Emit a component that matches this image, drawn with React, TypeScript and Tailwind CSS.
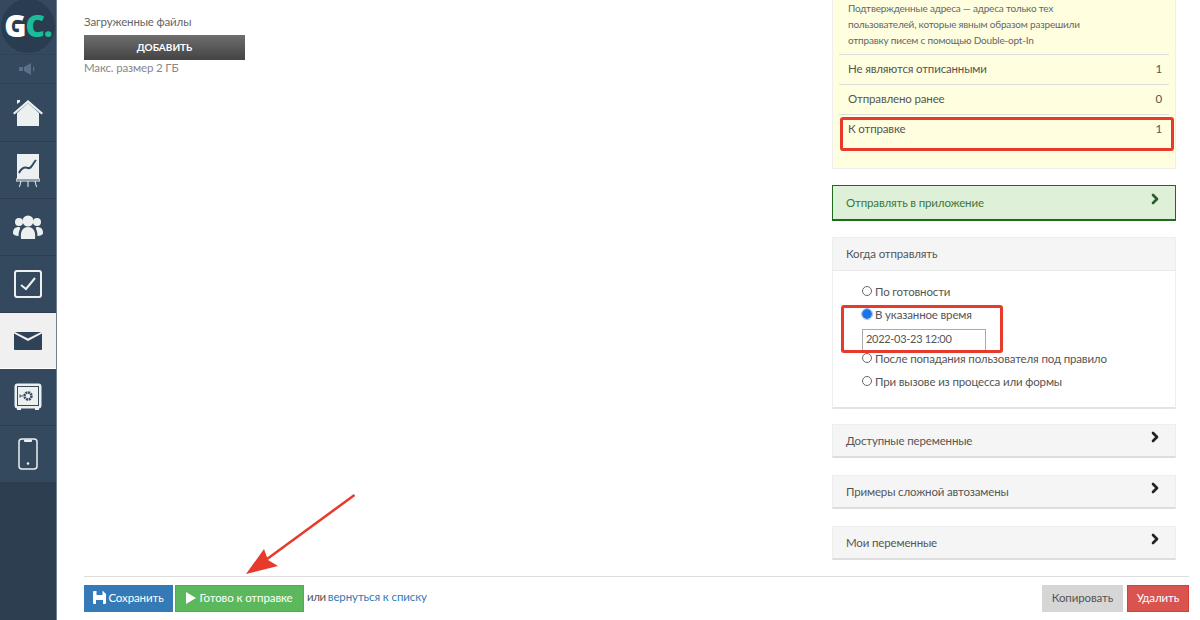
import { ChevronRight } from "lucide-react";

const font = { fontFamily: 'Lato, "Liberation Sans", sans-serif' };

function NavItem({ h, active, children }: { h: string; active?: boolean; children: React.ReactNode }) {
  return (
    <div className={`${h} flex items-center justify-center border-b ${active ? "bg-[#f0f0f0] border-white" : "border-[#2c3e50]"}`}>
      {children}
    </div>
  );
}

function Collapsed({ title, className }: { title: string; className?: string }) {
  return (
    <div className={`flex h-[34px] items-start justify-between border border-[#eee] border-b-2 border-b-[#ddd] bg-[#f5f5f5] pl-[13px] pr-[12px] ${className ?? ""}`}>
      <span className="mt-[7px] text-[11.5px] tracking-[-0.15px] text-[#555]">{title}</span>
      <ChevronRight size={16} strokeWidth={4} className="mt-[4px] text-[#222]" />
    </div>
  );
}

function Radio({ label, checked, className }: { label: string; checked?: boolean; className?: string }) {
  return (
    <div className={`flex h-[16px] items-center text-[11.5px] tracking-[-0.15px] text-[#555] ${className ?? ""}`}>
      <span className={`mr-[3px] mt-[-4px] h-[10px] w-[10px] shrink-0 rounded-full ${checked ? "bg-[#1a73e8] outline outline-1 outline-[#9cc0f2]" : "border border-[#666] bg-white"}`} />
      <span className="pb-[2px]">{label}</span>
    </div>
  );
}

function StatRow({ label, value, last }: { label: string; value: string; last?: boolean }) {
  return (
    <div className={`flex h-[30px] items-center justify-between pb-[2px] pl-[9px] pr-[7px] text-[11.5px] tracking-[-0.15px] text-[#555] ${last ? "" : "border-b border-[#ddd]"}`}>
      <span>{label}</span>
      <span>{value}</span>
    </div>
  );
}

export default function App() {
  return (
    <div className="relative flex h-[620px] w-[1200px] overflow-hidden bg-white" style={font}>
      <aside className="flex h-full w-[57px] shrink-0 flex-col border-r border-[#6d8094] bg-[#2c3e50]">
        <div className="flex h-[55px] items-start justify-center border-b border-[#2f4358] bg-[#34495e]">
          <div className="mt-[-1px] flex h-[54px] w-[54px] items-center justify-center rounded-full bg-[#2a3d50] text-[30px] leading-none font-black tracking-[-1px]" style={{ fontFamily: '"Open Sans", sans-serif' }}>
            <span className="text-white">G</span>
            <span className="text-[#1abc9c]">C.</span>
          </div>
        </div>
        <div className="flex h-[29px] items-center justify-center border-b border-[#2f4358] bg-[#34495e]">
          <svg width="18" height="12" viewBox="0 0 18 12" fill="#5a7086">
            <path d="M0 4h4v4H0zM5 4l7-4v12L5 8zM14 3c2 2 2 4 0 6z" />
          </svg>
        </div>
        <div className="bg-[#34495e]">
          <NavItem h="h-[58px]">
            <svg width="30" height="28" viewBox="0 0 30 28" fill="#ecf0f1">
              <path d="M4 14 15 4l11 10v13H4z" />
              <path d="M0 14 15 1l15 13-1.500 1.500L15 4 1.500 15.500zM4 5V1h3v2z" />
            </svg>
          </NavItem>
          <NavItem h="h-[57px]">
            <svg width="24" height="34" viewBox="0 0 24 34" fill="none">
              <rect x="1" y="1" width="22" height="25" fill="#ecf0f1" />
              <path d="M3 20c3-6 6-6 9-5s4-3 8-8" stroke="#34495e" strokeWidth="2" />
              <path d="M0 26h24v2H0zM5 28 3.500 34M19 28l1.500 6M12 28v6" stroke="#ecf0f1" strokeWidth="1" />
            </svg>
          </NavItem>
          <NavItem h="h-[57px]">
            <svg width="30" height="24" viewBox="0 0 30 24" fill="#ecf0f1">
              <circle cx="15" cy="6" r="5.500" />
              <circle cx="6" cy="7" r="4" />
              <circle cx="24" cy="7" r="4" />
              <path d="M8 24c-1-8 2-12 7-12s8 4 7 12z" />
              <path d="M0 18c0-4 2-6 6-6 1 0 1.500 1 1 2-1 2-1.500 4-1.500 7C3 21 0 20 0 18zM30 18c0-4-2-6-6-6-1 0-1.500 1-1 2 1 2 1.500 4 1.500 7 2.500 0 5.500-1 5.500-3z" />
            </svg>
          </NavItem>
          <NavItem h="h-[57px]">
            <svg width="28" height="28" viewBox="0 0 28 28" fill="none">
              <rect x="1" y="1" width="26" height="26" rx="2" stroke="#ecf0f1" strokeWidth="2" />
              <path d="M7 15l5 4 9-11" stroke="#ecf0f1" strokeWidth="2" />
            </svg>
          </NavItem>
          <NavItem h="h-[56px]" active>
            <svg width="28" height="18" viewBox="0 0 28 18" fill="#2f4358">
              <path d="M0 1.500 14 9l14-7.500V17a1 1 0 0 1-1 1H1a1 1 0 0 1-1-1z" />
              <path d="M1 0h26L14 6.500z" />
            </svg>
          </NavItem>
          <NavItem h="h-[57px]">
            <svg width="28" height="28" viewBox="0 0 28 28" fill="none">
              <rect x="1" y="1" width="26" height="24" rx="2" fill="#ecf0f1" stroke="#ecf0f1" />
              <rect x="3.500" y="3.500" width="21" height="19" fill="#ecf0f1" stroke="#34495e" strokeWidth="1" />
              <circle cx="14" cy="13" r="3.500" stroke="#34495e" strokeWidth="2.500" strokeDasharray="2 0.700" />
              <path d="M6 13h3M6 11.500v3" stroke="#34495e" strokeWidth="1" />
              <path d="M3 25h4v2H3zM21 25h4v2h-4z" fill="#ecf0f1" />
            </svg>
          </NavItem>
          <NavItem h="h-[57px]">
            <svg width="20" height="32" viewBox="0 0 20 32" fill="none">
              <rect x="1" y="1" width="18" height="30" rx="3" stroke="#ecf0f1" strokeWidth="1.500" />
              <path d="M6 1.500h8v1.500a1 1 0 0 1-1 1H7a1 1 0 0 1-1-1z" fill="#ecf0f1" />
              <circle cx="10" cy="25.500" r="1.300" fill="#ecf0f1" />
            </svg>
          </NavItem>
        </div>
      </aside>

      <main className="flex min-w-0 flex-1 flex-col pl-[27px] pr-[11px]">
        <div className="flex min-h-0 flex-1 justify-between">
          <div className="pt-[14px] tracking-[-0.15px]">
            <div className="text-[11.5px] leading-[15px] text-[#666]">Загруженные файлы</div>
            <button className="mt-[6px] flex h-[25px] w-[161px] items-center justify-center bg-gradient-to-b from-[#6e6e6e] to-[#444] text-[10px] font-bold tracking-normal text-white">
              ДОБАВИТЬ
            </button>
            <div className="text-[11.5px] leading-[15px] text-[#888]">Макс. размер 2 ГБ</div>
          </div>

          <div className="mr-[13px] w-[344px] shrink-0">
            <div className="h-[169px] border border-t-0 border-[#eee] bg-[#ffffe0] px-[6px]">
              <div className="h-[55px] border-b border-[#ddd] pl-[9px] text-[10px] leading-[16px] tracking-[-0.2px] text-[#666]">
                <div>Подтвержденные адреса — адреса только тех</div>
                <div>пользователей, которые явным образом разрешили</div>
                <div>отправку писем с помощью Double-opt-In</div>
              </div>
              <StatRow label="Не являются отписанными" value="1" />
              <StatRow label="Отправлено ранее" value="0" />
              <StatRow label="К отправке" value="1" last />
            </div>

            <div className="mt-[16px] flex h-[36px] items-start justify-between border border-[#1d6b1d] border-b-2 bg-[#dff0d8] pl-[13px] pr-[12px]">
              <span className="mt-[8px] text-[11.5px] tracking-[-0.15px] text-[#3c763d]">Отправлять в приложение</span>
              <ChevronRight size={16} strokeWidth={4} className="mt-[5px] text-[#2b5e2c]" />
            </div>

            <div className="mt-[16px] h-[172px] border border-[#eee] border-b-2 border-b-[#e4e4e4]">
              <div className="h-[33px] border-b border-[#e8e8e8] bg-[#f5f5f5] pl-[13px] pt-[7px] text-[11.5px] leading-[17px] tracking-[-0.15px] text-[#555]">
                Когда отправлять
              </div>
              <div className="pl-[29px] pt-[14px]">
                <Radio label="По готовности" />
                <Radio label="В указанное время" checked className="mt-[7px]" />
                <div className="mt-[5px] flex h-[22px] w-[124px] items-center border border-[#aaa] bg-white pb-[2px] pl-[3px] text-[11px] tracking-[-0.3px] text-[#555]">
                  2022-03-23 12:00
                </div>
                <Radio label="После попадания пользователя под правило" className="mt-[1px]" />
                <Radio label="При вызове из процесса или формы" className="mt-[7px]" />
              </div>
            </div>

            <Collapsed title="Доступные переменные" className="mt-[15px]" />
            <Collapsed title="Примеры сложной автозамены" className="mt-[17px]" />
            <Collapsed title="Мои переменные" className="mt-[17px]" />
          </div>
        </div>

        <div className="flex h-[44px] shrink-0 items-start justify-between border-t border-[#ddd] pt-[8px]">
          <div className="flex items-center text-[11.5px] tracking-[-0.1px]">
            <button className="flex h-[27px] w-[89px] items-center justify-center gap-[2px] bg-[#337ab7] pb-[2px] text-white">
              <svg width="13" height="13" viewBox="0 0 13 13" fill="white">
                <path d="M0 1a1 1 0 0 1 1-1h9l3 3v9a1 1 0 0 1-1 1H1a1 1 0 0 1-1-1zM3.500 0v4h6V0zM3 9v4h7V9z" fillRule="evenodd" />
              </svg>
              Сохранить
            </button>
            <button className="ml-[2px] flex h-[27px] w-[129px] items-center justify-center gap-[2px] border border-[#4cae4c] bg-[#5cb85c] pb-[2px] text-white">
              <svg width="11" height="12" viewBox="0 0 11 12" fill="white">
                <path d="M0 0l10 6-10 6z" />
              </svg>
              Готово к отправке
            </button>
            <span className="ml-[3px] pb-[3px] tracking-[-0.4px] text-[#555]">или</span>
            <a className="ml-[2px] pb-[3px] text-[#337ab7]">вернуться к списку</a>
          </div>
          <div className="flex items-center text-[11.5px] tracking-[-0.1px]">
            <button className="flex h-[27px] w-[81px] items-center justify-center bg-[#d6d6d6] pb-[2px] text-[#555]">Копировать</button>
            <button className="ml-[4px] flex h-[27px] w-[62px] items-center justify-center border border-[#d43f3a] bg-[#d9534f] pb-[2px] text-white">Удалить</button>
          </div>
        </div>
      </main>

      {/* annotations drawn over the screenshot */}
      <div className="absolute left-[840px] top-[117px] h-[34px] w-[334px] rounded-[3px] border-[3px] border-[#e8392d]" />
      <div className="absolute left-[841px] top-[305px] h-[48px] w-[162px] rounded-[3px] border-[3px] border-[#e8392d]" />
      <svg className="absolute left-[240px] top-[490px]" width="120" height="90" viewBox="0 0 120 90" fill="#e8392d">
        <path d="M114.500 5 23 72" stroke="#e8392d" strokeWidth="2.500" fill="none" />
        <path d="M6 84 24 59l4 11 10 6z" />
      </svg>
    </div>
  );
}
